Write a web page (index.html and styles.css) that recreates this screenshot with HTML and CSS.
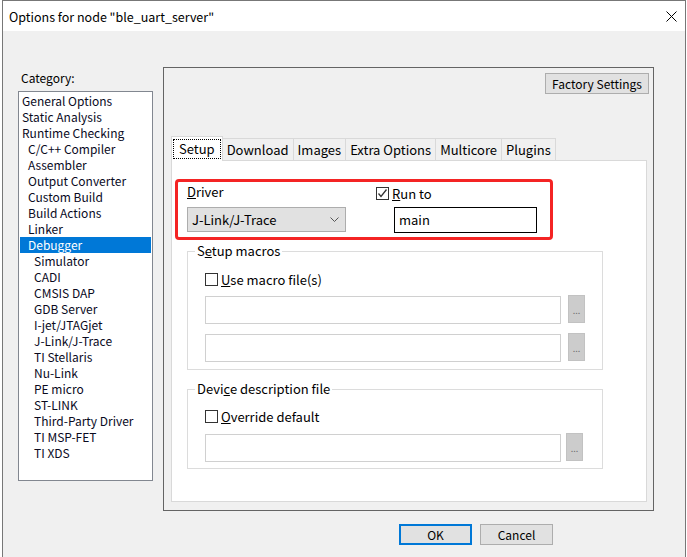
FILE: index.html
```html
<!DOCTYPE html>
<html lang="en">
<head>
    <meta charset="UTF-8">
    <title>Options for node "ble_uart_server"</title>
    <link rel="stylesheet" href="styles.css">
</head>
<body>

<div class="window">
    <!-- Title bar -->
    <div class="titlebar">
        <span class="title">Options for node "ble_uart_server"</span>
        <svg class="close" width="11" height="11" viewBox="0 0 11 11">
            <path d="M0.5 0.5 L10.5 10.5 M10.5 0.5 L0.5 10.5" stroke="#000" stroke-width="1" fill="none"/>
        </svg>
    </div>

    <div class="client">
        <div class="main-row">
            <!-- Category list -->
            <div class="category">
                <div class="category-label">Category:</div>
                <ul class="listbox">
                    <li>General Options</li>
                    <li>Static Analysis</li>
                    <li>Runtime Checking</li>
                    <li class="sub">C/C++ Compiler</li>
                    <li class="sub">Assembler</li>
                    <li class="sub">Output Converter</li>
                    <li class="sub">Custom Build</li>
                    <li class="sub">Build Actions</li>
                    <li class="sub">Linker</li>
                    <li class="sub selected">Debugger</li>
                    <li class="subsub">Simulator</li>
                    <li class="subsub">CADI</li>
                    <li class="subsub">CMSIS DAP</li>
                    <li class="subsub">GDB Server</li>
                    <li class="subsub">I-jet/JTAGjet</li>
                    <li class="subsub">J-Link/J-Trace</li>
                    <li class="subsub">TI Stellaris</li>
                    <li class="subsub">Nu-Link</li>
                    <li class="subsub">PE micro</li>
                    <li class="subsub">ST-LINK</li>
                    <li class="subsub">Third-Party Driver</li>
                    <li class="subsub">TI MSP-FET</li>
                    <li class="subsub">TI XDS</li>
                </ul>
            </div>

            <!-- Options panel -->
            <div class="panel">
                <div class="panel-top">
                    <button class="btn factory">Factory Settings</button>
                </div>

                <div class="tabs">
                    <div class="tab active"><span class="focus">Setup</span></div>
                    <div class="tab">Download</div>
                    <div class="tab">Images</div>
                    <div class="tab">Extra Options</div>
                    <div class="tab">Multicore</div>
                    <div class="tab">Plugins</div>
                </div>

                <div class="tab-page">
                    <!-- Driver / Run to (highlighted) -->
                    <div class="highlight">
                        <div class="driver-col">
                            <div class="label"><u>D</u>river</div>
                            <div class="combo">
                                <span>J-Link/J-Trace</span>
                                <svg width="9" height="5" viewBox="0 0 9 5">
                                    <polyline points="0.5,0.5 4.5,4.5 8.5,0.5" stroke="#555" stroke-width="1" fill="none"/>
                                </svg>
                            </div>
                        </div>
                        <div class="runto-col">
                            <div class="check-row">
                                <span class="checkbox">
                                    <svg width="11" height="11" viewBox="0 0 11 11">
                                        <polyline points="1.5,5.5 4,8.5 9.5,1.5" stroke="#333" stroke-width="1.3" fill="none"/>
                                    </svg>
                                </span>
                                <span><u>R</u>un to</span>
                            </div>
                            <div class="textbox">main</div>
                        </div>
                    </div>

                    <!-- Setup macros -->
                    <fieldset class="group">
                        <legend>S<u>e</u>tup macros</legend>
                        <div class="check-row">
                            <span class="checkbox"></span>
                            <span><u>U</u>se macro file(s)</span>
                        </div>
                        <div class="file-row">
                            <div class="field"></div>
                            <div class="browse">...</div>
                        </div>
                        <div class="file-row">
                            <div class="field"></div>
                            <div class="browse">...</div>
                        </div>
                    </fieldset>

                    <!-- Device description file -->
                    <fieldset class="group device">
                        <legend>Devi<u>c</u>e description file</legend>
                        <div class="check-row">
                            <span class="checkbox"></span>
                            <span><u>O</u>verride default</span>
                        </div>
                        <div class="file-row narrow">
                            <div class="field"></div>
                            <div class="browse">...</div>
                        </div>
                    </fieldset>
                </div>
            </div>
        </div>

        <!-- OK / Cancel -->
        <div class="dialog-buttons">
            <button class="btn default">OK</button>
            <button class="btn">Cancel</button>
        </div>
    </div>
</div>

</body>
</html>
```

FILE: styles.css
```css
/* Reset */
body {
    margin: 0;
    background: #ffffff;
    font-family: "Noto Sans CJK SC", "Noto Sans", sans-serif;
    font-size: 12px;
    color: #000;
    overflow: hidden;
}

/* Window frame */
.window {
    margin-left: 2px;
    width: 684px;
    height: 557px;
    box-sizing: border-box;
    border: 1px solid #777777;
    border-bottom: none;
    display: flex;
    flex-direction: column;
}

.titlebar {
    height: 30px;
    background: #fff;
    display: flex;
    align-items: center;
    padding: 0 8px 0 6px;
}

.title {
    font-size: 12.5px;
}

.close {
    margin-left: auto;
}

.client {
    flex: 1;
    background: #f0f0f0;
}

.main-row {
    display: flex;
    align-items: flex-start;
}

/* Category list */
.category {
    margin: 39px 0 0 15px;
    width: 135px;
}

.category-label {
    height: 16px;
    line-height: 16px;
    margin-bottom: 5px;
    padding-left: 3px;
}

.listbox {
    list-style: none;
    margin: 0;
    padding: 1px;
    height: 390px;
    box-sizing: border-box;
    border: 1px solid #828790;
    background: #fff;
}

.listbox li {
    height: 16px;
    line-height: 16px;
    padding-left: 2px;
    white-space: nowrap;
    color: #0a0a1e;
}

.listbox li.sub {
    padding-left: 8px;
}

.listbox li.subsub {
    padding-left: 14px;
}

.listbox li.selected {
    background: #0078d7;
    color: #fff;
}

/* Right panel */
.panel {
    margin: 36px 0 0 10px;
    width: 491px;
    height: 444px;
    box-sizing: border-box;
    border: 1px solid #646464;
    padding: 5px 6px 8px 7px;
    display: flex;
    flex-direction: column;
}

.panel-top {
    display: flex;
    justify-content: flex-end;
    margin-right: -2px;
}

.btn {
    font-family: inherit;
    font-size: 12px;
    height: 21px;
    width: 73px;
    padding: 0;
    background: #e1e1e1;
    border: 1px solid #adadad;
    color: #000;
}

.btn.factory {
    width: 104px;
}

.btn.default {
    border: 2px solid #0078d7;
}

/* Tabs */
.tabs {
    margin-top: 42px;
    display: flex;
    align-items: flex-end;
    height: 24px;
    font-size: 13px;
}

.tab {
    height: 22px;
    line-height: 21px;
    box-sizing: border-box;
    padding: 0 4px;
    border: 1px solid #d9d9d9;
    border-bottom: none;
    margin-left: -1px;
    background: #f0f0f0;
}

.tab.active {
    height: 25px;
    margin-left: 0;
    margin-bottom: -1px;
    padding: 2px 1px 1px 1px;
    background: #fff;
    position: relative;
    z-index: 1;
}

.tab .focus {
    display: block;
    height: 20px;
    line-height: 18px;
    box-sizing: border-box;
    border: 1px dotted #000;
    padding: 0 5px;
}

.tab-page {
    flex: 1;
    background: #fff;
    border: 1px solid #d9d9d9;
    font-size: 13px;
}

/* Highlighted driver box */
.highlight {
    margin: 18px 0 0 3px;
    width: 378px;
    height: 61px;
    box-sizing: border-box;
    border: 3px solid #f42424;
    border-radius: 4px;
    padding: 2px 0 0 9px;
    display: flex;
}

.driver-col {
    width: 159px;
}

.label {
    height: 16px;
    line-height: 16px;
    margin-bottom: 7px;
}

.combo {
    height: 25px;
    box-sizing: border-box;
    background: #e1e1e1;
    border: 1px solid #adadad;
    display: flex;
    align-items: center;
    justify-content: space-between;
    padding: 0 6px 0 4px;
}

.runto-col {
    margin-left: 30px;
}

.check-row {
    display: flex;
    align-items: center;
    height: 16px;
    margin-top: 1px;
}

.checkbox {
    width: 13px;
    height: 13px;
    box-sizing: border-box;
    border: 1px solid #333;
    background: #fff;
    margin-right: 3px;
    display: flex;
    align-items: center;
    justify-content: center;
}

.textbox {
    margin: 6px 0 0 18px;
    width: 143px;
    height: 26px;
    box-sizing: border-box;
    border: 1px solid #000;
    line-height: 24px;
    padding-left: 4px;
}

/* Group boxes */
.group {
    margin: 3px 0 0 15px;
    width: 416px;
    box-sizing: border-box;
    border: 1px solid #dcdcdc;
    padding: 0 0 7px 17px;
}

.group legend {
    margin-left: -10px;
    padding: 0 2px;
    height: 16px;
    line-height: 16px;
}

.group .check-row {
    margin-top: 12px;
}

.group.device {
    margin-top: 11px;
    padding-bottom: 6px;
}

.group.device .check-row {
    margin-top: 11px;
}

.file-row {
    display: flex;
    align-items: flex-start;
    margin-top: 9px;
}

.file-row + .file-row {
    margin-top: 10px;
}

.group.device .file-row {
    margin-top: 10px;
}

.field {
    width: 356px;
    height: 28px;
    box-sizing: border-box;
    border: 1px solid #d0d0d0;
    background: #fff;
}

.browse {
    margin: -1px 0 0 7px;
    width: 17px;
    height: 28px;
    box-sizing: border-box;
    background: #cccccc;
    border: 1px solid #c2c2c2;
    color: #707070;
    font-size: 9px;
    line-height: 30px;
    text-align: center;
}

.file-row.narrow .browse {
    margin-left: 5px;
}

/* Dialog buttons */
.dialog-buttons {
    display: flex;
    gap: 8px;
    margin-top: 13px;
    padding-left: 396px;
}
```
